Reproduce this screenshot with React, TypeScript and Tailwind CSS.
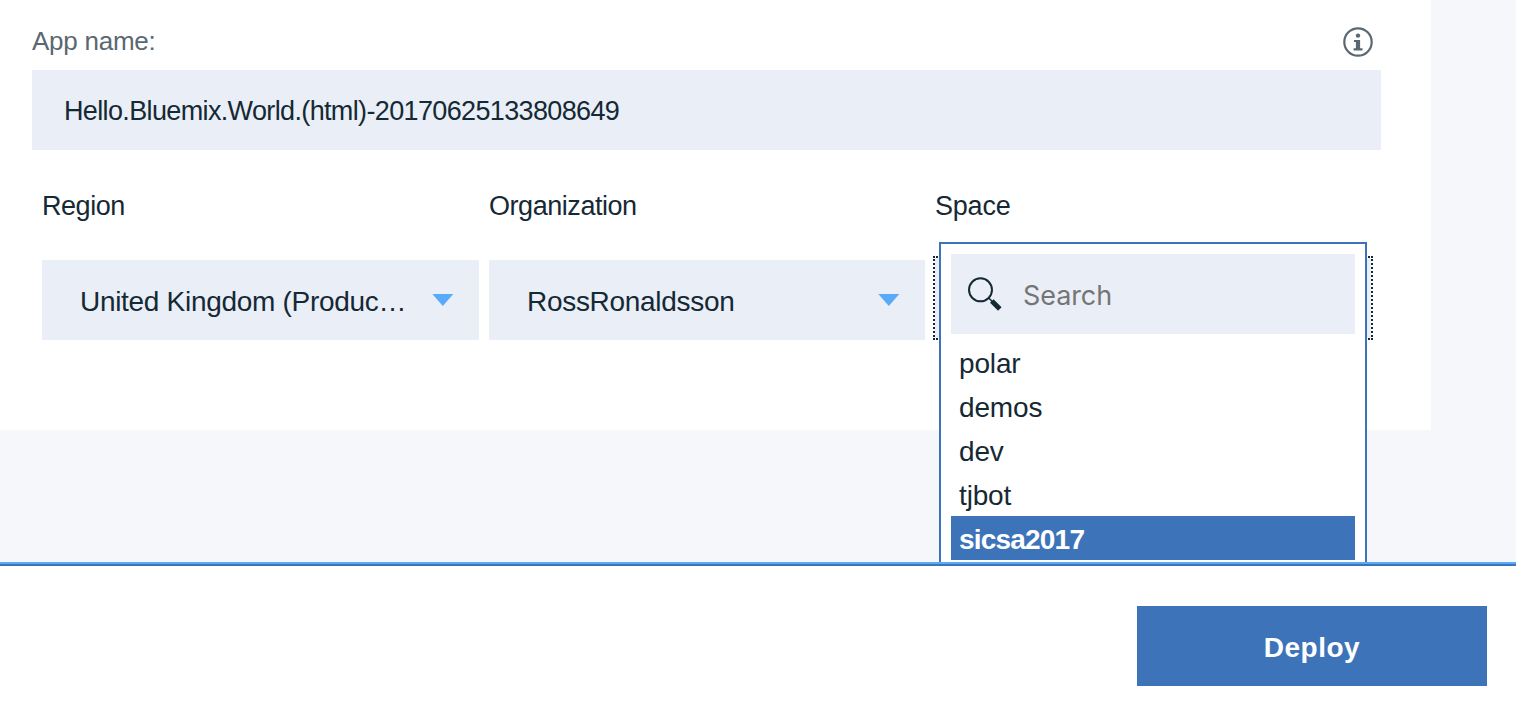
import React from "react";

const Caret = () => (
  <svg width="22" height="12" viewBox="0 0 22 12" className="shrink-0">
    <path d="M0.3 0H21.3L10.8 12Z" fill="#5aaafa" />
  </svg>
);

const InfoIcon = () => (
  <svg width="30" height="30" viewBox="0 0 30 30" className="shrink-0">
    <circle cx="15" cy="15" r="13.7" fill="none" stroke="#5a6872" strokeWidth="2.2" />
    <circle cx="15" cy="8.6" r="2.2" fill="#5a6872" />
    <path d="M11 13H17.1V21.2H19.5V23.4H10.6V21.2H12.9V15.1H11Z" fill="#5a6872" />
  </svg>
);

const SearchIcon = () => (
  <svg width="36" height="36" viewBox="0 0 36 36" className="shrink-0">
    <circle cx="13.5" cy="13.8" r="11.5" fill="none" stroke="#152935" strokeWidth="2" />
    <path d="M22 22.3L25.5 25.8" stroke="#152935" strokeWidth="1.6" />
    <path d="M24.8 25.1L32.8 33.1" stroke="#152935" strokeWidth="5" />
  </svg>
);

function SelectField({ label, value }: { label: string; value: string }) {
  return (
    <div className="flex min-w-0 flex-col">
      <span className="h-[70px] pt-[1px] text-[27px] leading-[30px] tracking-[-0.45px]">{label}</span>
      <div className="flex h-[80px] items-center justify-between bg-[#eaeff7] pr-[25px] pl-[38px]">
        <span className="pt-[4px] text-[28px] leading-[30px] tracking-[-0.3px] whitespace-nowrap">{value}</span>
        <Caret />
      </div>
    </div>
  );
}

const spaces = ["polar", "demos", "dev", "tjbot", "sicsa2017"];

function SpaceMenu() {
  return (
    <div className="absolute top-[-16px] left-[4px] z-10 h-[340px] w-[428px] border-2 border-[#3d74b9] bg-white p-[10px]">
      <div className="flex h-[80px] items-center bg-[#eaeff7] pl-[16px]">
        <SearchIcon />
        <span className="ml-[20px] pt-[3px] [font-family:Inter,sans-serif] text-[27px] leading-[30px] font-normal tracking-[-0.1px] text-[#757575]">Search</span>
      </div>
      <ul className="pt-[6px]">
        {spaces.map((s) => (
          <li
            key={s}
            className={
              s === "sicsa2017"
                ? "h-[44px] bg-[#3d74b9] pl-[8px] text-[28px] leading-[48px] font-bold tracking-[-0.8px] text-white"
                : "h-[44px] pl-[8px] text-[28px] leading-[48px] tracking-[-0.15px]"
            }
          >
            {s}
          </li>
        ))}
      </ul>
    </div>
  );
}

export default function App() {
  return (
    <div className="flex h-[710px] w-[1516px] flex-col overflow-hidden bg-white font-['Liberation_Sans',Arial,sans-serif] text-[#152935]">
      <main className="h-[562px] overflow-hidden bg-[#f5f7fb]">
        <section className="h-[430px] w-[1431px] bg-white pr-[50px] pl-[32px]">
          <div className="flex h-[70px] items-start justify-between pt-[27px] pr-[8px]">
            <span className="-mt-px text-[26px] leading-[30px] tracking-[-0.25px] text-[#5a6872]">App name:</span>
            <InfoIcon />
          </div>
          <div className="flex h-[80px] items-center bg-[#eaeff7] px-[32px]">
            <span className="pt-[2px] text-[27px] leading-[30px] tracking-[-0.64px]">Hello.Bluemix.World.(html)-20170625133808649</span>
          </div>
          <div className="grid grid-cols-[437px_436px_436px] gap-[10px] px-[10px] pt-[40px]">
            <SelectField label="Region" value="United Kingdom (Produc…" />
            <SelectField label="Organization" value="RossRonaldsson" />
            <div className="flex min-w-0 flex-col">
              <span className="h-[68px] pt-[1px] text-[27px] leading-[30px] tracking-[-0.2px]">Space</span>
              <div className="relative h-[80px] bg-[#eaeff7] outline-2 outline-[#152935] outline-dotted">
                <SpaceMenu />
              </div>
            </div>
          </div>
        </section>
      </main>
      <div className="h-[2px] bg-[#5aaafa]" />
      <footer className="flex h-[146px] justify-end border-t-2 border-[#3d74b9] bg-white pt-[40px] pr-[29px]">
        <button className="h-[80px] w-[350px] bg-[#3d74b9] pt-[3px] text-[28px] font-bold tracking-[0.5px] text-white">Deploy</button>
      </footer>
    </div>
  );
}
